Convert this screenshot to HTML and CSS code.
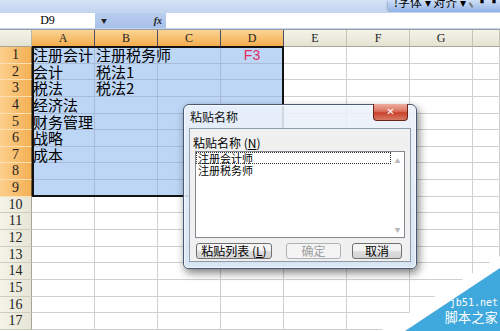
FILE: index.html
```html
<!DOCTYPE html>
<html>
<head>
<meta charset="utf-8">
<link rel="stylesheet" href="styles.css">
</head>
<body>
<div class="topbar">
  <div class="tb"><span class="tbt">!字体 ▾ 对齐 ▾</span><span class="eraser"></span><span class="tbt">▪▪</span></div>
</div>
<div class="fbar">
  <div class="name">D9</div>
  <div class="mid"><span class="arrow">▼</span><span class="fx">fx</span></div>
  <div class="input"></div>
</div>
<div class="sheet">
  <div class="corner"></div>
  <div class="ch hs">A</div><div class="ch hs">B</div><div class="ch hs">C</div><div class="ch hs">D</div><div class="ch">E</div><div class="ch">F</div><div class="ch">G</div><div class="ch"></div>

  <div class="rh rs">1</div><div class="c s clip">注册会计师</div><div class="c s"><span class="t">注册税务师</span></div><div class="c s"></div><div class="c s red">F3</div><div class="c"></div><div class="c"></div><div class="c"></div><div class="c"></div>
  <div class="rh rs">2</div><div class="c s">会计</div><div class="c s">税法1</div><div class="c s"></div><div class="c s"></div><div class="c"></div><div class="c"></div><div class="c"></div><div class="c"></div>
  <div class="rh rs">3</div><div class="c s">税法</div><div class="c s">税法2</div><div class="c s"></div><div class="c s"></div><div class="c"></div><div class="c"></div><div class="c"></div><div class="c"></div>
  <div class="rh rs">4</div><div class="c s">经济法</div><div class="c s"></div><div class="c s"></div><div class="c s"></div><div class="c"></div><div class="c"></div><div class="c"></div><div class="c"></div>
  <div class="rh rs">5</div><div class="c s">财务管理</div><div class="c s"></div><div class="c s"></div><div class="c s"></div><div class="c"></div><div class="c"></div><div class="c"></div><div class="c"></div>
  <div class="rh rs">6</div><div class="c s">战略</div><div class="c s"></div><div class="c s"></div><div class="c s"></div><div class="c"></div><div class="c"></div><div class="c"></div><div class="c"></div>
  <div class="rh rs">7</div><div class="c s">成本</div><div class="c s"></div><div class="c s"></div><div class="c s"></div><div class="c"></div><div class="c"></div><div class="c"></div><div class="c"></div>
  <div class="rh rs">8</div><div class="c s"></div><div class="c s"></div><div class="c s"></div><div class="c s"></div><div class="c"></div><div class="c"></div><div class="c"></div><div class="c"></div>
  <div class="rh rs">9</div><div class="c s"></div><div class="c s"></div><div class="c s"></div><div class="c s"></div><div class="c"></div><div class="c"></div><div class="c"></div><div class="c"></div>
  <div class="rh">10</div><div class="c"></div><div class="c"></div><div class="c"></div><div class="c"></div><div class="c"></div><div class="c"></div><div class="c"></div><div class="c"></div>
  <div class="rh">11</div><div class="c"></div><div class="c"></div><div class="c"></div><div class="c"></div><div class="c"></div><div class="c"></div><div class="c"></div><div class="c"></div>
  <div class="rh">12</div><div class="c"></div><div class="c"></div><div class="c"></div><div class="c"></div><div class="c"></div><div class="c"></div><div class="c"></div><div class="c"></div>
  <div class="rh">13</div><div class="c"></div><div class="c"></div><div class="c"></div><div class="c"></div><div class="c"></div><div class="c"></div><div class="c"></div><div class="c"></div>
  <div class="rh">14</div><div class="c"></div><div class="c"></div><div class="c"></div><div class="c"></div><div class="c"></div><div class="c"></div><div class="c"></div><div class="c"></div>
  <div class="rh">15</div><div class="c"></div><div class="c"></div><div class="c"></div><div class="c"></div><div class="c"></div><div class="c"></div><div class="c"></div><div class="c"></div>
  <div class="rh">16</div><div class="c"></div><div class="c"></div><div class="c"></div><div class="c"></div><div class="c"></div><div class="c"></div><div class="c"></div><div class="c"></div>
  <div class="rh">17</div><div class="c"></div><div class="c"></div><div class="c"></div><div class="c"></div><div class="c"></div><div class="c"></div><div class="c"></div><div class="c"></div>
  <div class="sel"></div>
</div>

<div class="dlg">
  <div class="dtitle">粘贴名称</div>
  <div class="close">✕</div>
  <div class="panel">
    <div class="lbl">粘贴名称 (<u>N</u>)</div>
    <div class="list">
      <div class="items">
        <div class="item focus">注册会计师</div>
        <div class="item">注册税务师</div>
      </div>
      <div class="sb"><span>▲</span><span>▼</span></div>
    </div>
    <div class="btns">
      <div class="btn b1">粘贴列表 (<u>L</u>)</div>
      <div class="btn b2 dis">确定</div>
      <div class="btn b3">取消</div>
    </div>
  </div>
</div>

<div class="wm">
  <svg class="wmbg" width="120" height="75" viewBox="0 0 120 75">
    <polygon points="0,75 120,0 120,75" fill="#ffffff"/>
    <polygon points="25,75 120,12 120,75" fill="#3fa8dc"/>
  </svg>
  <div class="wt1">jb51.net</div>
  <div class="wt2">脚本之家</div>
</div>
</body>
</html>
```
FILE: styles.css
```css
* { box-sizing: border-box; margin: 0; padding: 0; }
html, body { width: 500px; height: 331px; overflow: hidden; }
body { background: #fff; font-family: "Noto Sans CJK SC", sans-serif; position: relative; color: #000; }

.topbar { height: 12px; background: linear-gradient(#d6e3f6, #c3d4f0); display: flex; justify-content: flex-end; overflow: hidden; }
.tb { width: 112px; height: 12px; background: linear-gradient(#cfdff6, #8fb2e6); border-bottom-left-radius: 6px; display: flex; align-items: flex-start; gap: 4px; padding-left: 6px; overflow: hidden; box-shadow: -1px 1px 2px rgba(60,90,140,.4); }
.tbt { font-size: 12px; line-height: 12px; margin-top: -4px; white-space: nowrap; }
.eraser { width: 9px; height: 6px; margin-top: 2px; background: #f4f4f4; border: 1px solid #7a7a7a; transform: rotate(-35deg); border-radius: 1px; }

.fbar { height: 18px; display: flex; background: #c3d4f0; padding: 1px 0 1px; border-bottom: 1px solid #9c9c9c; }
.name { width: 95px; background: #fff; font: 12px/15px "Liberation Serif", serif; text-align: center; }
.mid { width: 71px; background: linear-gradient(#b9cdee, #a7c0ea); display: flex; align-items: center; justify-content: space-between; padding: 0 4px 0 6px; }
.arrow { font-size: 6px; color: #222; }
.fx { font: italic bold 10px "Liberation Serif", serif; color: #222; }
.input { flex: 1; background: #fff; }

.sheet { position: relative; display: grid; grid-template-columns: 32px repeat(7, 63px) 27px; grid-template-rows: 17px repeat(17, 16.65px); }
.corner { background: linear-gradient(#f4f3e9, #e4e3d3); border-right: 1px solid #b9b8a6; border-bottom: 1px solid #a6a594; }
.ch { background: linear-gradient(#f4f3e9, #e4e3d3); border-right: 1px solid #c4c3b1; border-bottom: 1px solid #a6a594; font: 12px/16px "Liberation Serif", serif; text-align: center; color: #222; }
.ch.hs { background: linear-gradient(#fbd496, #f4ad4e); border-right: 1px solid #4c4c66; border-bottom: 1px solid #6d5a3a; }
.rh { background: linear-gradient(90deg, #f4f3e9, #e6e5d5); border-right: 1px solid #a6a594; border-bottom: 1px solid #cfcdbc; font: 14px/16px "Liberation Serif", serif; text-align: center; color: #222; }
.rh.rs { background: linear-gradient(90deg, #fbcf8c, #f4b055); border-bottom: 1px solid #fbe0b4; border-right: 1px solid #6d5a3a; }
.c { border-right: 1px solid #d0d0d0; border-bottom: 1px solid #d0d0d0; font-size: 15px; line-height: 16px; white-space: nowrap; padding-left: 1px; }
.c.s { background: #bdd6f5; border-color: #a8bcd8; }
.clip { overflow: hidden; }
.t { position: relative; }
.red { color: #e42d5e; text-align: center; font-family: "Liberation Sans", sans-serif; font-size: 14px; padding-left: 0; }
.sel { position: absolute; grid-row: 2 / 11; grid-column: 2 / 6; inset: -1px 0 0 0; border: 2px solid #111; }

.dlg { position: absolute; left: 183px; top: 104px; width: 234px; height: 165px; border: 1px solid #4a5a70; border-radius: 6px 6px 5px 5px; background: linear-gradient(rgba(236,242,250,.88), rgba(214,227,242,.9)); box-shadow: 2px 4px 9px rgba(0,0,0,.5), inset 0 0 0 1px rgba(255,255,255,.6); padding: 0 5px 6px; display: flex; flex-direction: column; }
.dtitle { height: 23px; display: flex; align-items: center; padding-left: 1px; font-size: 12px; color: #111; }
.close { position: absolute; top: -1px; right: 8px; width: 35px; height: 17px; border: 1px solid #6c2418; border-top: none; border-radius: 0 0 4px 4px; background: linear-gradient(#eeaea0, #dc7360 45%, #c8412b 55%, #d87a66); color: #fff; font: bold 10px/16px "DejaVu Sans", sans-serif; text-align: center; }
.panel { flex: 1; background: #f0f0f0; border: 1px solid #8e9cae; padding: 8px 5px 2px; display: flex; flex-direction: column; }
.lbl { font-size: 12px; line-height: 12px; height: 12px; margin-left: -2px; white-space: nowrap; }
.lbl u, .btn u { text-decoration: underline; }
.list { margin-top: 2px; height: 87px; background: #fff; border: 1px solid #828790; display: flex; }
.items { flex: 1; padding-top: 0; }
.item { font-size: 11px; line-height: 12px; height: 12px; padding-left: 2px; white-space: nowrap; }
.item.focus { border: 1px dotted #333; line-height: 10px; padding-left: 1px; }
.sb { width: 13px; display: flex; flex-direction: column; justify-content: space-between; align-items: center; font-size: 6px; color: #b8b8b8; padding: 4px 0 3px; }
.btns { margin-top: 5px; display: flex; height: 16px; }
.btn { height: 16px; border: 1px solid #707070; border-radius: 3px; background: linear-gradient(#f4f4f4 45%, #dddddd 55%, #d3d3d3); font-size: 12px; line-height: 14px; text-align: center; white-space: nowrap; }
.b1 { width: 76px; margin-left: 1px; }
.b2 { width: 55px; margin-left: 14px; }
.b3 { width: 50px; margin-left: 11px; }
.btn.dis { border-color: #adb2b5; background: #f4f4f4; color: #a0a0a0; }

.wm { position: absolute; right: 0; bottom: 0; width: 120px; height: 75px; display: flex; flex-direction: column; align-items: flex-end; justify-content: flex-end; padding: 0 2px 7px 0; color: #fff; }
.wmbg { position: absolute; left: 0; top: 0; }
.wt1 { position: relative; font: 10px/10px "DejaVu Sans Mono", monospace; margin-bottom: 1px; }
.wt2 { position: relative; font-size: 13px; line-height: 15px; letter-spacing: 0.3px; }
```
